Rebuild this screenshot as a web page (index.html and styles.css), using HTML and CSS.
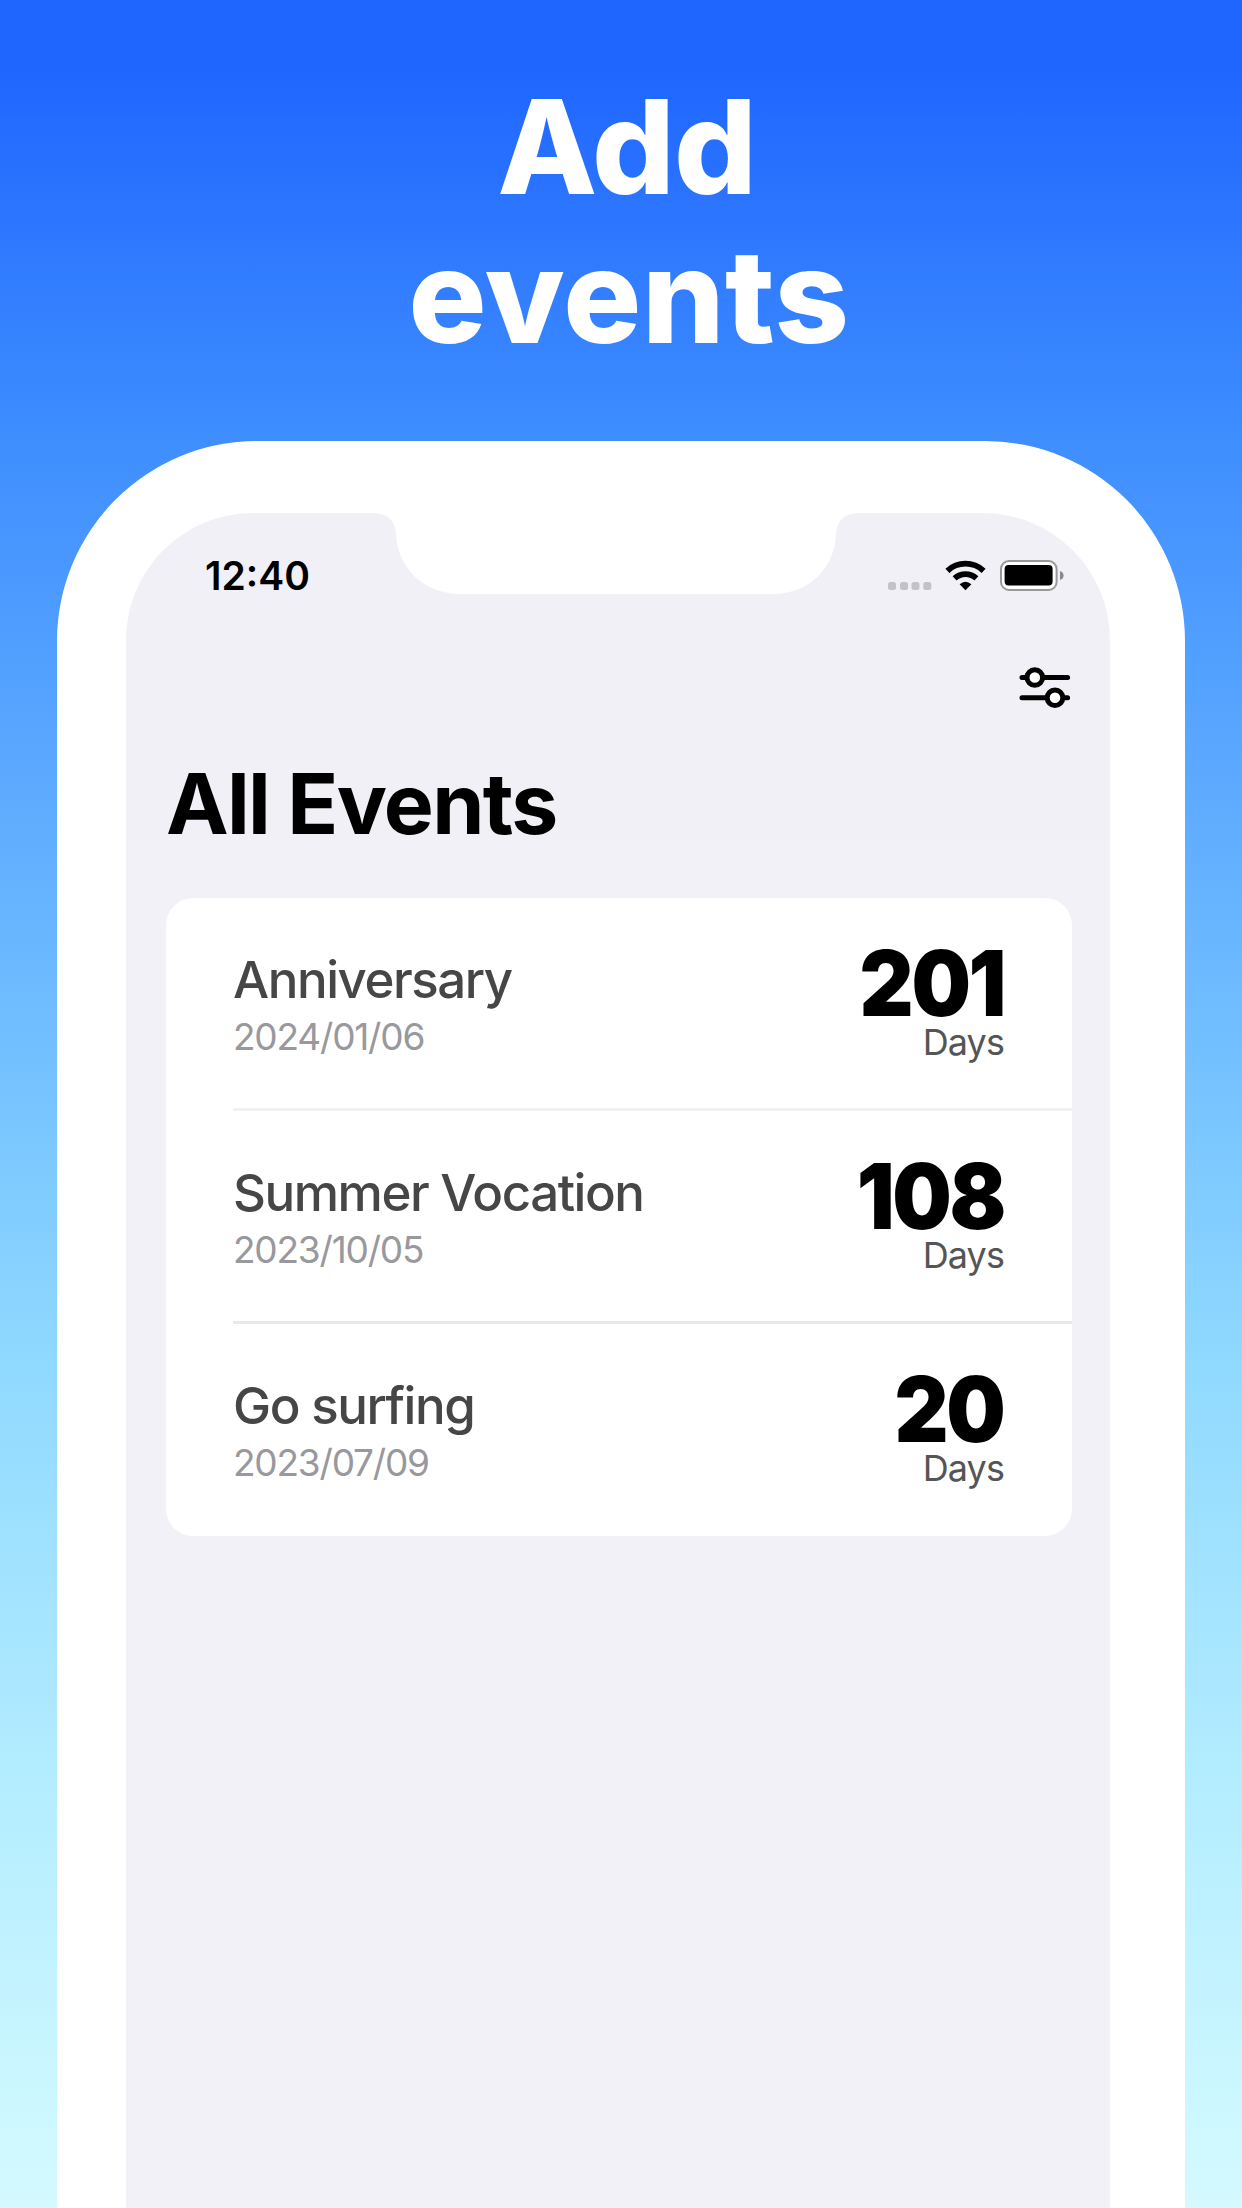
FILE: index.html
```html
<!DOCTYPE html>
<html lang="en">
<head>
  <meta charset="utf-8">
  <title>Add events</title>
  <link rel="stylesheet" href="styles.css">
</head>
<body>
  <h1 class="headline"><span class="headline-top">Add</span><span class="headline-bottom">events</span></h1>

  <div class="phone">
    <div class="screen">
      <svg class="notch" viewBox="0 0 490 82">
        <path d="M0 0 H4 C18 1 24 9 25 20 C26 55 53 81 90 81 H402 C438 81 464 55 465 20 C466 9 472 1 486 0 Z" fill="#ffffff"/>
      </svg>

      <div class="status-bar">
        <span class="clock">12:40</span>
        <div class="status-icons">
          <svg class="signal" viewBox="0 0 44 8">
            <rect x="0" y="0" width="8" height="8" rx="2.5"/>
            <rect x="12" y="0" width="8" height="8" rx="2.5"/>
            <rect x="23.5" y="0" width="8" height="8" rx="2.5"/>
            <rect x="35.3" y="0" width="8" height="8" rx="2.5"/>
          </svg>
          <svg class="wifi" viewBox="0 0 42 31">
            <path d="M2.4 10.8 A26.5 26.5 0 0 1 38.6 10.8" fill="none" stroke="#000" stroke-width="5.8"/>
            <path d="M9.6 18.4 A16 16 0 0 1 31.4 18.4" fill="none" stroke="#000" stroke-width="5.8"/>
            <path d="M14.6 24.2 Q20.5 19.2 26.4 24.2 L20.5 30.2 Z"/>
          </svg>
          <svg class="battery" viewBox="0 0 64 31">
            <rect x="1" y="1" width="55.6" height="29" rx="8" fill="#fff" stroke="#98989b" stroke-width="2"/>
            <rect x="4.6" y="5" width="48" height="20.6" rx="4"/>
            <path d="M60 11 Q63.6 12 63.6 15.5 Q63.6 19 60 20 Z" fill="#8a8a8d"/>
          </svg>
        </div>
      </div>

      <div class="toolbar">
        <svg class="filter" viewBox="0 0 52 42" fill="none" stroke="#000" stroke-width="5" stroke-linecap="round">
          <path d="M3 10.5 H7 M25 10.5 H48.6 M3 30.7 H27 M46 30.7 H48.6"/>
          <circle cx="15.8" cy="10.5" r="7.8" fill="#fff"/>
          <circle cx="36" cy="30.7" r="7.8" fill="#fff"/>
        </svg>
      </div>

      <h2 class="page-title">All Events</h2>

      <div class="events">
        <div class="event">
          <div class="event-info">
            <div class="event-name">Anniversary</div>
            <div class="event-date">2024/01/06</div>
          </div>
          <div class="event-count">
            <div class="count">201</div>
            <div class="unit">Days</div>
          </div>
        </div>
        <div class="event">
          <div class="event-info">
            <div class="event-name">Summer Vocation</div>
            <div class="event-date">2023/10/05</div>
          </div>
          <div class="event-count">
            <div class="count">108</div>
            <div class="unit">Days</div>
          </div>
        </div>
        <div class="event">
          <div class="event-info">
            <div class="event-name">Go surfing</div>
            <div class="event-date">2023/07/09</div>
          </div>
          <div class="event-count">
            <div class="count">20</div>
            <div class="unit">Days</div>
          </div>
        </div>
      </div>
    </div>
  </div>
</body>
</html>
```

FILE: styles.css
```css
* {
  box-sizing: border-box;
}

body {
  margin: 0;
  height: 2208px;
  overflow: hidden;
  display: flex;
  flex-direction: column;
  font-family: Inter, "Liberation Sans", sans-serif;
  background: linear-gradient(#1f66ff 0%, #1f66ff 3%, #3f8eff 20%, #6ebbff 45%, #8ed8ff 61%, #b6eeff 82%, #d4faff 100%);
}

/* Headline */
.headline {
  margin: 72px 0 71px;
  display: flex;
  flex-direction: column;
  align-items: center;
  color: #ffffff;
  font-size: 130px;
  font-weight: 800;
  line-height: 149px;
}

.headline-top {
  padding-left: 11px;
  letter-spacing: -1px;
}

.headline-bottom {
  padding-left: 16px;
  letter-spacing: 0.6px;
}

/* Phone */
.phone {
  flex: 1;
  width: 1128px;
  margin-left: 57px;
  padding: 72px 75px 0 69px;
  background-color: #ffffff;
  border-radius: 200px 200px 0 0;
}

.screen {
  position: relative;
  height: 100%;
  background: linear-gradient(#f1f0f6 326px, #f2f1f7 326px);
  border-radius: 127px 127px 0 0;
}

.notch {
  position: absolute;
  left: 245px;
  top: 0;
  width: 490px;
  height: 82px;
}

.status-bar {
  display: flex;
  justify-content: space-between;
  align-items: flex-start;
  height: 141px;
  padding: 46px 46px 0 79px;
}

.clock {
  font-size: 39px;
  font-weight: 600;
  line-height: 34px;
}

.status-icons {
  display: flex;
  align-items: flex-end;
  padding-top: 1px;
}

.signal {
  width: 44px;
  height: 8px;
  margin-right: 13px;
  margin-bottom: 1px;
  fill: #c3c2c7;
}

.wifi {
  width: 42px;
  height: 31px;
  margin-right: 13px;
}

.battery {
  width: 64px;
  height: 31px;
}

.toolbar {
  display: flex;
  justify-content: flex-end;
  height: 100px;
  padding: 13px 39px 0 0;
}

.filter {
  width: 52px;
  height: 42px;
}

.page-title {
  margin: 0;
  height: 144px;
  padding-left: 40px;
  font-size: 84px;
  font-weight: 700;
  letter-spacing: -1.7px;
  line-height: 100px;
}

/* Event list */
.events {
  width: 906px;
  height: 638px;
  margin-left: 40px;
  background-color: #ffffff;
  border-radius: 27px;
}

.event {
  display: flex;
  justify-content: space-between;
  height: 213px;
  margin-left: 67px;
  padding: 51px 68px 0 0;
}

.event:first-child {
  height: 210px;
}

.event + .event {
  border-top: 3px solid #f1f1f1;
}

.event:last-child {
  border-top-color: #e8e8e8;
}

.event-name {
  color: #464646;
  font-size: 51px;
  font-weight: 500;
  letter-spacing: -1.45px;
  line-height: 62px;
}

.event-date {
  padding-top: 3px;
  color: #98989d;
  font-size: 37px;
  letter-spacing: -1.2px;
  line-height: 46px;
}

.event-count {
  text-align: right;
}

.count {
  font-size: 91px;
  font-weight: 900;
  letter-spacing: -2.5px;
  line-height: 68px;
  transform: scaleX(0.92);
  transform-origin: right;
}

.unit {
  padding-top: 3px;
  color: #555555;
  font-size: 36px;
  letter-spacing: -0.9px;
  line-height: 44px;
}
```
